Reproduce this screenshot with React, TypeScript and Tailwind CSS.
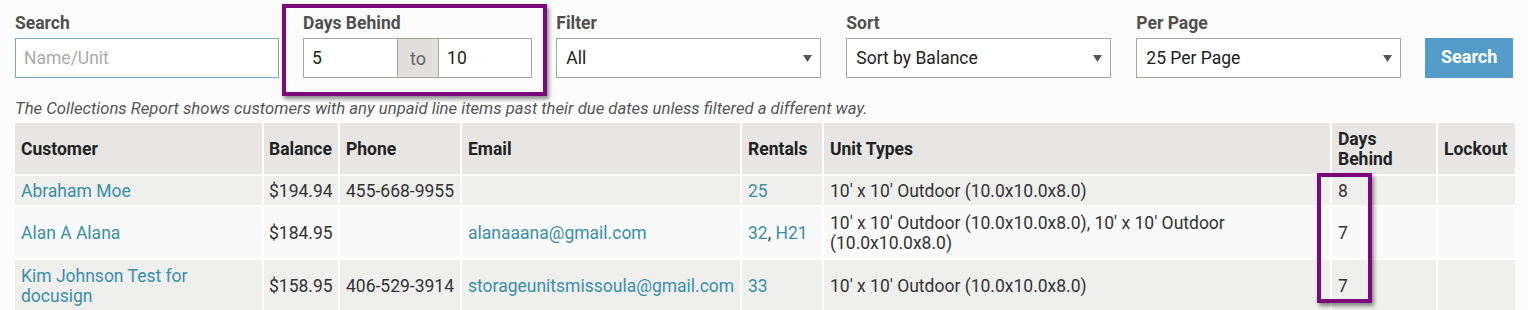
const rows = [
  {
    customer: ["Abraham Moe"],
    balance: "$194.94",
    phone: "455-668-9955",
    email: "",
    rentals: ["25"],
    units: "10' x 10' Outdoor (10.0x10.0x8.0)",
    days: "8",
    bg: "bg-[#efefee]",
    h: "h-[31px]",
  },
  {
    customer: ["Alan A Alana"],
    balance: "$184.95",
    phone: "",
    email: "alanaaana@gmail.com",
    rentals: ["32", "H21"],
    units: "10' x 10' Outdoor (10.0x10.0x8.0), 10' x 10' Outdoor (10.0x10.0x8.0)",
    days: "7",
    bg: "bg-[#f9f9f9]",
    h: "h-[53px]",
  },
  {
    customer: ["Kim Johnson Test for", "docusign"],
    balance: "$158.95",
    phone: "406-529-3914",
    email: "storageunitsmissoula@gmail.com",
    rentals: ["33"],
    units: "10' x 10' Outdoor (10.0x10.0x8.0)",
    days: "7",
    bg: "bg-[#efefee]",
    h: "h-[53px]",
  },
];

function Caret() {
  return (
    <svg width="9" height="7" viewBox="0 0 9 7" className="shrink-0">
      <path d="M0 0h9L4.5 7z" fill="#555" />
    </svg>
  );
}

function Select({ value }: { value: string }) {
  return (
    <div className="flex h-[40px] w-[265px] items-center justify-between border border-[#a9a49f] bg-white pl-[9px] pr-[8px] text-[17.5px] text-[#222]">
      <span>{value}</span>
      <Caret />
    </div>
  );
}

function Label({ children }: { children: string }) {
  return <div className="mb-[5px] h-[20px] text-[17.5px] font-bold leading-[20px] text-[#4f4f4f]">{children}</div>;
}

export default function App() {
  return (
    <div className="h-[310px] w-[1528px] overflow-hidden bg-[#fcfcfc] font-['Roboto',sans-serif] text-[#333]">
      <div className="flex items-end px-[15px] pt-[13px]">
        <div className="w-[265px]">
          <Label>Search</Label>
          <div className="flex h-[40px] items-center border border-[#74a9cf] bg-white px-[8px] text-[17.5px] text-[#aaa]">
            Name/Unit
          </div>
        </div>

        <div className="relative ml-[24px] w-[230px]">
          <Label>Days Behind</Label>
          <div className="flex h-[40px] text-[17.5px] text-[#222]">
            <div className="flex w-[95px] items-center border border-[#a9a49f] bg-white px-[8px]">5</div>
            <div className="flex w-[40px] items-center justify-center border-y border-[#a9a49f] bg-[#e0dfdd] text-[18px] text-[#666]">
              to
            </div>
            <div className="flex flex-1 items-center border border-[#a9a49f] bg-white px-[8px]">10</div>
          </div>
          <div className="absolute left-[-21px] top-[-9px] h-[92px] w-[265px] border-4 border-[#7c097c] shadow-[2px_3px_4px_rgba(0,0,0,0.45)]" />
        </div>

        <div className="ml-[24px]">
          <Label>Filter</Label>
          <Select value="All" />
        </div>
        <div className="ml-[25px]">
          <Label>Sort</Label>
          <Select value="Sort by Balance" />
        </div>
        <div className="ml-[25px]">
          <Label>Per Page</Label>
          <Select value="25 Per Page" />
        </div>
        <button className="ml-[24px] flex h-[40px] w-[88px] items-center justify-center bg-[#539bc8] pb-[3px] text-[18px] font-bold text-white">
          Search
        </button>
      </div>

      <p className="mt-[21px] whitespace-nowrap px-[15px] text-[16.7px] italic leading-[20px] text-[#555]">
        The Collections Report shows customers with any unpaid line items past their due dates unless filtered a different way.
      </p>

      <div className="relative mx-[15px] mt-[4px] w-[1500px]">
        <table className="w-[1500px] table-fixed border-collapse text-left text-[17.5px] leading-[20px]">
          <colgroup>
            <col className="w-[248px]" />
            <col className="w-[76px]" />
            <col className="w-[122px]" />
            <col className="w-[280px]" />
            <col className="w-[82px]" />
            <col className="w-[508px]" />
            <col className="w-[106px]" />
            <col className="w-[78px]" />
          </colgroup>
          <thead>
            <tr className="h-[52px] bg-[#e7e6e5] text-[#222]">
              <th className="border-2 border-t-0 border-l-0 border-white px-[6px] font-bold">Customer</th>
              <th className="whitespace-nowrap border-2 border-t-0 border-white px-[5px] font-bold">Balance</th>
              <th className="border-2 border-t-0 border-white px-[6px] font-bold">Phone</th>
              <th className="border-2 border-t-0 border-white px-[6px] font-bold">Email</th>
              <th className="border-2 border-t-0 border-white px-[6px] font-bold">Rentals</th>
              <th className="border-2 border-t-0 border-white px-[6px] font-bold">Unit Types</th>
              <th className="border-2 border-t-0 border-white px-[6px] font-bold">
                Days
                <br />
                Behind
              </th>
              <th className="border-2 border-t-0 border-r-0 border-white px-[6px] font-bold">Lockout</th>
            </tr>
          </thead>
          <tbody>
            {rows.map((r, i) => (
              <tr key={i} className={`${r.bg} ${r.h}`}>
                <td className="border-2 border-l-0 border-white px-[6px] text-[#3a8ea8]">
                  {r.customer.map((c, j) => (
                    <div key={j}>{c}</div>
                  ))}
                </td>
                <td className="whitespace-nowrap border-2 border-white px-[5px]">{r.balance}</td>
                <td className="whitespace-nowrap border-2 border-white px-[6px]">{r.phone}</td>
                <td className="whitespace-nowrap border-2 border-white px-[6px] text-[#3a8ea8]">{r.email}</td>
                <td className="whitespace-nowrap border-2 border-white px-[6px]">
                  {r.rentals.map((x, j) => (
                    <span key={j}>
                      {j > 0 && ", "}
                      <span className="text-[#3a8ea8]">{x}</span>
                    </span>
                  ))}
                </td>
                <td className="border-2 border-white px-[6px]">{r.units}</td>
                <td className="border-2 border-white px-[6px]">{r.days}</td>
                <td className="border-2 border-r-0 border-white px-[6px]"></td>
              </tr>
            ))}
          </tbody>
        </table>
        <div className="absolute left-[1302px] top-[50px] h-[130px] w-[55px] border-4 border-[#7c097c] shadow-[2px_3px_4px_rgba(0,0,0,0.45)]" />
      </div>
    </div>
  );
}
